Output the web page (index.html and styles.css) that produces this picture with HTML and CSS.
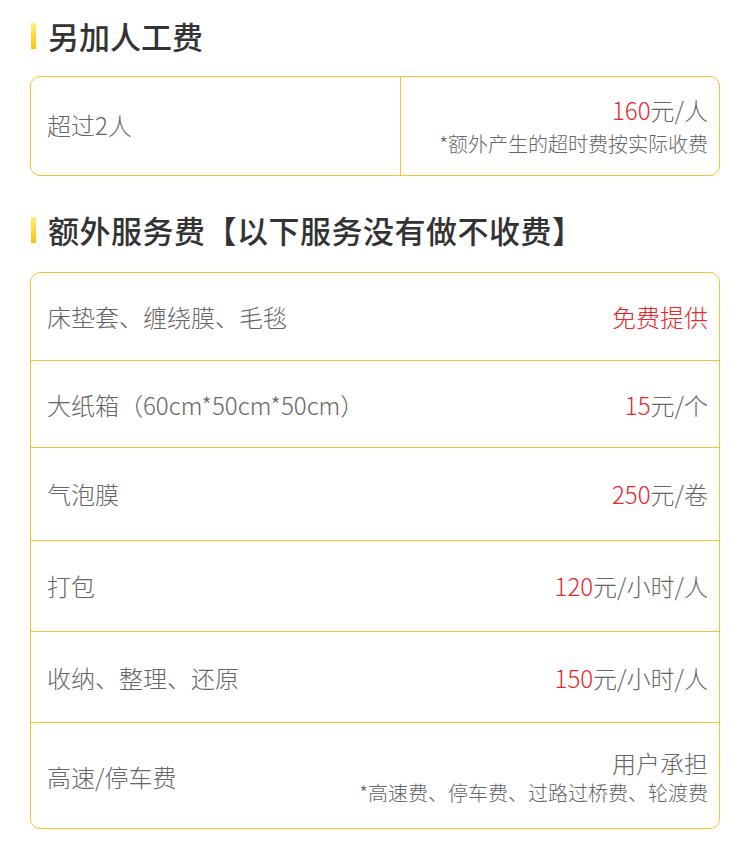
FILE: index.html
```html
<!DOCTYPE html>
<html lang="zh">
<head>
<meta charset="utf-8">
<link rel="stylesheet" href="styles.css">
</head>
<body>
<div class="page">
  <h2 class="title"><span class="bar"></span>另加人工费</h2>
  <div class="card card-split">
    <div class="cell cell-left"><span class="label">超过2人</span></div>
    <div class="cell cell-right">
      <div class="price"><span class="red">160</span>元/人</div>
      <div class="note">*额外产生的超时费按实际收费</div>
    </div>
  </div>

  <h2 class="title title-second"><span class="bar"></span>额外服务费【以下服务没有做不收费】</h2>
  <div class="card card-list">
    <div class="row r1"><span class="label">床垫套、缠绕膜、毛毯</span><span class="price red">免费提供</span></div>
    <div class="row r2"><span class="label">大纸箱（60cm*50cm*50cm）</span><span class="price"><span class="red">15</span>元/个</span></div>
    <div class="row r3"><span class="label">气泡膜</span><span class="price"><span class="red">250</span>元/卷</span></div>
    <div class="row r4"><span class="label">打包</span><span class="price"><span class="red">120</span>元/小时/人</span></div>
    <div class="row r5"><span class="label">收纳、整理、还原</span><span class="price"><span class="red">150</span>元/小时/人</span></div>
    <div class="row r6"><span class="label">高速/停车费</span>
      <div class="right-col">
        <div class="price">用户承担</div>
        <div class="note">*高速费、停车费、过路过桥费、轮渡费</div>
      </div>
    </div>
  </div>
</div>
</body>
</html>
```

FILE: styles.css
```css
* { box-sizing: border-box; }
html, body { margin: 0; padding: 0; background: #fff; }
body {
  font-family: "Noto Sans CJK SC", "Noto Sans", sans-serif;
  color: #666;
  font-weight: 300;
}
.page { padding: 16px 30px 0 30px; }
.title {
  display: flex;
  align-items: center;
  margin: 0 0 20px 0;
  height: 40px;
  font-size: 31px;
  font-weight: 500;
  color: #333;
  line-height: 40px;
}
.title-second { margin-top: 34px; margin-bottom: 22px; letter-spacing: 0.5px; }
.bar {
  display: inline-block;
  width: 5px;
  height: 26px;
  margin-left: 1px;
  margin-right: 12px;
  background: linear-gradient(to bottom, #fff07a, #ffc000);
}
.card {
  border: 1px solid #f7c231;
  border-radius: 10px;
  background: #fff;
}
.card-split {
  display: flex;
  height: 100px;
}
.cell { display: flex; flex-direction: column; justify-content: center; }
.cell-left {
  width: 370px;
  padding-left: 16px;
  padding-bottom: 3px;
  border-right: 1px solid #f7c231;
}
.cell-right {
  flex: 1;
  align-items: flex-end;
  padding-right: 11px;
  padding-bottom: 1px;
}
.label { font-size: 24px; color: #666; line-height: 32px; }
.price { font-size: 24px; color: #666; line-height: 32px; }
.red { color: #e8262b; }
.note { font-size: 20px; color: #666; line-height: 28px; margin-top: 4px; }
.card-list { display: flex; flex-direction: column; }
.row {
  display: flex;
  align-items: center;
  justify-content: space-between;
  padding: 0 11px 0 16px;
  border-bottom: 1px solid #f7c231;
}
.row:last-child { border-bottom: none; }
.r1 { height: 88px; padding-top: 1px; }
.r2 { height: 87px; padding-top: 1px; }
.r3 { height: 93px; padding-top: 0; }
.r4 { height: 91px; padding-top: 0; }
.r5 { height: 91px; padding-top: 1px; }
.r6 { height: 105px; padding-top: 3px; }
.right-col { display: flex; flex-direction: column; align-items: flex-end; }
.right-col .note { margin-top: 0; }
```
